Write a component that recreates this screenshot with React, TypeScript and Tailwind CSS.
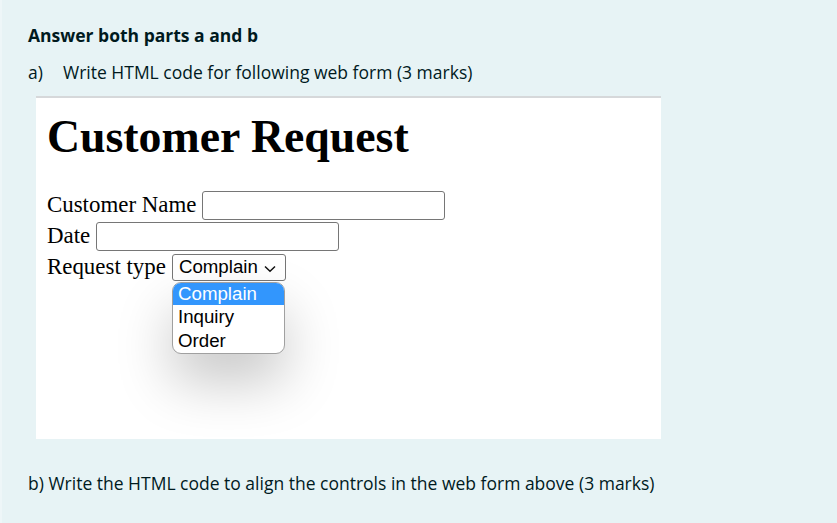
import React from "react";

function Chevron() {
  return (
    <svg width="12" height="8" viewBox="0 0 12 8" className="ml-[6px] mt-[2px]">
      <path d="M1 1.5 L6 6.2 L11 1.5" fill="none" stroke="#111" strokeWidth="1.5" />
    </svg>
  );
}

export default function App() {
  return (
    <div
      className="w-[837px] h-[523px] bg-[#e7f3f5] text-[#001a1e] overflow-hidden border-l-2 border-[#eef6f8]"
      style={{ fontFamily: '"Open Sans", "Noto Sans", sans-serif' }}
    >
      <div className="pl-[26px] pt-[22px]">
        <div className="text-[17.5px] font-bold leading-[26px]">Answer both parts a and b</div>
        <div className="mt-[11px] flex text-[17.5px] leading-[26px]">
          <span className="w-[35px]">a)</span>
          <span>Write HTML code for following web form (3 marks)</span>
        </div>

        <div className="mt-[11px] ml-[8px] w-[625px] h-[343px] bg-white border-t-2 border-[#d6d8da] relative"
          style={{ fontFamily: '"Liberation Serif", serif' }}>
          <div className="pl-[11px] pt-[13px]">
            <div className="text-[45.8px] font-bold leading-[52px] text-black">Customer Request</div>
            <div className="mt-[27px] text-[22.9px] text-black">
              <div className="flex items-center h-[31px]">
                <span>Customer Name</span>
                <div className="ml-[6px] w-[243px] h-[29px] border border-[#767676] rounded-[3px] bg-white" />
              </div>
              <div className="flex items-center h-[31px]">
                <span>Date</span>
                <div className="ml-[6px] w-[243px] h-[29px] border border-[#767676] rounded-[3px] bg-white" />
              </div>
              <div className="flex items-center h-[31px] relative">
                <span>Request type</span>
                <div className="ml-[6px] w-[114px] h-[27px] border border-[#767676] rounded-[3px] bg-white flex items-center pl-[6px]"
                  style={{ fontFamily: '"Liberation Sans", Arial, sans-serif' }}>
                  <span className="text-[18.7px] leading-none">Complain</span>
                  <Chevron />
                </div>
                <div
                  className="absolute left-[125px] top-[30px] w-[113px] h-[72px] border border-[#a0a0a0] rounded-[9px] bg-white overflow-hidden shadow-[0_28px_55px_rgba(0,0,0,0.22)]"
                  style={{ fontFamily: '"Liberation Sans", Arial, sans-serif' }}
                >
                  <div className="h-[22px] bg-[#3296fd] text-white text-[18.7px] leading-[22px] pl-[5px]">Complain</div>
                  <div className="h-[24px] text-[18.7px] leading-[24px] pl-[5px] text-black">Inquiry</div>
                  <div className="h-[24px] text-[18.7px] leading-[24px] pl-[5px] text-black">Order</div>
                </div>
              </div>
            </div>
          </div>
        </div>

        <div className="mt-[31px] text-[17.5px] leading-[26px]">
          b) Write the HTML code to align the controls in the web form above (3 marks)
        </div>
      </div>
    </div>
  );
}
